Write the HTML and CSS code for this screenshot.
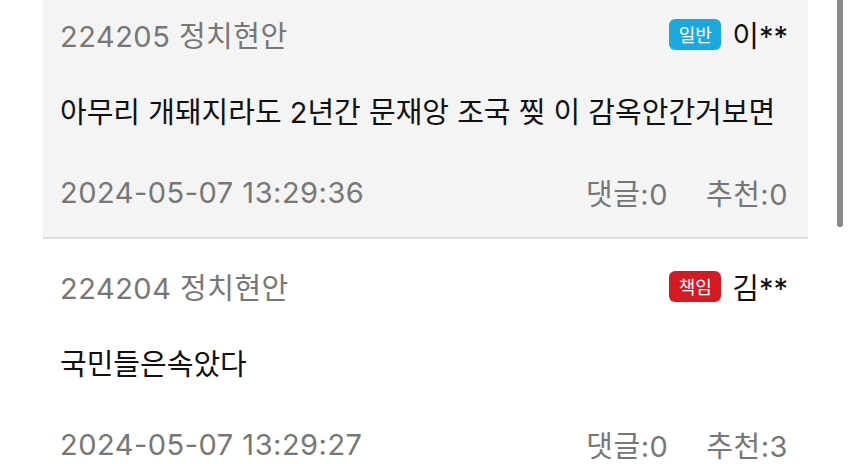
FILE: index.html
```html
<!DOCTYPE html>
<html lang="ko">
<head>
<meta charset="utf-8">
<meta name="viewport" content="width=device-width, initial-scale=1.0">
<title>게시판</title>
<link rel="stylesheet" href="styles.css">
</head>
<body>

<div class="board">
	<ul class="post-list">
		<li class="post selected">
			<div class="post-head">
				<span class="post-no">224205 정치현안</span>
				<span class="writer"><span class="badge normal">일반</span>이**</span>
			</div>
			<p class="post-title">아무리 개돼지라도 2년간 문재앙 조국 찢 이 감옥안간거보면</p>
			<div class="post-foot">
				<span class="date">2024-05-07 13:29:36</span>
				<span class="counts"><span>댓글:0</span><span>추천:0</span></span>
			</div>
		</li>
		<li class="post">
			<div class="post-head">
				<span class="post-no">224204 정치현안</span>
				<span class="writer"><span class="badge duty">책임</span>김**</span>
			</div>
			<p class="post-title">국민들은속았다</p>
			<div class="post-foot">
				<span class="date">2024-05-07 13:29:27</span>
				<span class="counts"><span>댓글:0</span><span>추천:3</span></span>
			</div>
		</li>
	</ul>
	<div class="scroll-thumb"></div>
</div>

</body>
</html>
```

FILE: styles.css
```css
*{
	margin: 0;
	padding: 0;
	box-sizing: border-box;
}
html, body {
	height: 100%;
	overflow: hidden;
	background: #fff;
}
body {
	font-family: Inter, "Noto Sans CJK KR", sans-serif;
	font-size: 29px;
	color: #111;
}
.board {
	position: relative;
	height: 100%;
	padding-left: 43px;
}
/* list is scrolled down a little */
.post-list {
	width: 765px;
	margin-top: -13px;
	list-style: none;
}
.post {
	height: 252px;
	padding: 29px 20px 0 17px;
	border-bottom: 2px solid #dedede;
}
.post.selected {
	background: #f4f4f4;
}
.post-head,
.post-foot {
	display: flex;
	justify-content: space-between;
	align-items: center;
	height: 36px;
}
.post-no,
.date,
.counts {
	color: #777;
	letter-spacing: 0.5px;
}
.writer {
	display: flex;
	align-items: center;
	gap: 11px;
	color: #111;
}
.badge {
	display: inline-flex;
	align-items: center;
	justify-content: center;
	width: 52px;
	height: 31px;
	border-radius: 6px;
	font-size: 18px;
	letter-spacing: 0;
	color: #fff;
}
.badge.normal {
	background: #1ba8dc;
}
.badge.duty {
	background: #d41b22;
}
.post-title {
	height: 36px;
	line-height: 36px;
	margin-top: 43px;
}
.post-foot {
	margin-top: 43px;
}
.counts {
	display: flex;
	gap: 38px;
}
.scroll-thumb {
	position: absolute;
	top: -10px;
	right: 7px;
	width: 6px;
	height: 250px;
	border-radius: 3px;
	background: #878787;
}
```
